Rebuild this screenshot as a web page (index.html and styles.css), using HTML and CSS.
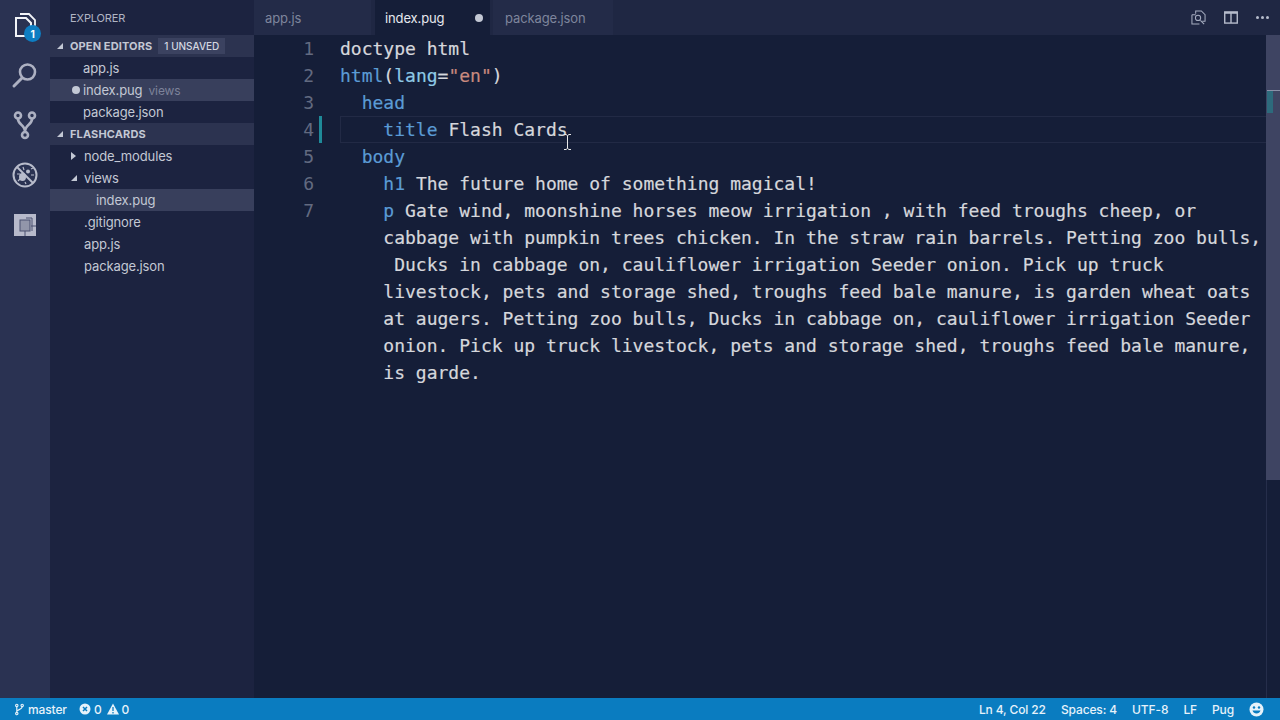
FILE: index.html
```html
<!DOCTYPE html>
<html lang="en">
<head>
<meta charset="utf-8">
<title>index.pug</title>
<link rel="stylesheet" href="styles.css">
</head>
<body>
<div class="window">
  <div class="main">
    <nav class="activity">
      <div class="act-item act-files">
        <svg width="26" height="30" viewBox="0 0 26 30" fill="none" stroke="#f2f4f8" stroke-width="2"><path d="M4 8h10l5 5v13H4z"/><path d="M8 4h9l6 6v11" stroke-width="1.800"/></svg>
        <span class="badge">1</span>
      </div>
      <div class="act-item">
        <svg width="28" height="28" viewBox="0 0 28 28" fill="none" stroke="#adb1c2" stroke-width="2.600"><circle cx="16.500" cy="11" r="7.500"/><path d="M11 17 3 25" stroke-linecap="round" stroke-width="3"/></svg>
      </div>
      <div class="act-item">
        <svg width="26" height="30" viewBox="0 0 26 30" fill="none" stroke="#adb1c2" stroke-width="2.600"><circle cx="6" cy="5.500" r="3"/><circle cx="20" cy="5.500" r="3"/><circle cx="13" cy="25" r="3"/><path d="M6 9c0 6 7 5 7 13M20 9c0 6-7 5-7 13"/></svg>
      </div>
      <div class="act-item">
        <svg width="28" height="28" viewBox="0 0 28 28" fill="none" stroke="#b8bccb"><circle cx="14" cy="14" r="11.500" stroke-width="2"/><path d="M6 6 22 22" stroke-width="2"/><ellipse cx="11.500" cy="16" rx="3.500" ry="4" fill="#b8bccb" stroke="none"/><circle cx="17" cy="10.500" r="2" fill="#b8bccb" stroke="none"/><path d="M6 13h3M7 20l2-2M14 21l1 2M20 14h3M20 8l2-1M12 6l1 3" stroke-width="1.200"/></svg>
      </div>
      <div class="act-item">
        <svg width="24" height="24" viewBox="0 0 24 24"><rect x="1" y="1" width="22" height="22" fill="#b7bacb"/><path d="M13 5h6v13M18 13h5M12 18v5" fill="none" stroke="#4a5170" stroke-width="1"/><rect x="7" y="7" width="10" height="11" fill="#9296aa" stroke="#4a5170"/></svg>
      </div>
    </nav>
    <aside class="sidebar">
      <div class="side-title">EXPLORER</div>
      <div class="sec-head"><span class="arrow-down"></span><b>OPEN EDITORS</b><span class="pill">1 UNSAVED</span></div>
      <div class="row open">app.js</div>
      <div class="row open selected"><span class="dot"></span>index.pug<span class="hint">views</span></div>
      <div class="row open">package.json</div>
      <div class="sec-head"><span class="arrow-down"></span><b>FLASHCARDS</b></div>
      <div class="row tree"><span class="arrow-right"></span>node_modules</div>
      <div class="row tree"><span class="arrow-down small"></span>views</div>
      <div class="row nested selected">index.pug</div>
      <div class="row tree">.gitignore</div>
      <div class="row tree">app.js</div>
      <div class="row tree">package.json</div>
    </aside>
    <section class="editor">
      <div class="tabs">
        <div class="tab tab-app">app.js</div>
        <div class="tab tab-active">index.pug<span class="tab-dot"></span></div>
        <div class="tab tab-pkg">package.json</div>
        <div class="tab-fill">
          <svg width="15" height="15" viewBox="0 0 16 16" fill="none" stroke="#a6adc0" stroke-width="1.100"><path d="M5 4V1h6l4 4v7h-3"/><path d="M1 5h4M1 5v10h8"/><circle cx="7.500" cy="8.500" r="2.800"/><path d="m10 11 4 4"/></svg>
          <svg width="14" height="13" viewBox="0 0 15 14" fill="none" stroke="#b6bccc" stroke-width="1.500"><rect x=".75" y="1" width="13.500" height="12"/><path d="M7.500 1v12"/><path d="M.75 2h13.500" stroke-width="2"/></svg>
          <span class="more"><i></i><i></i><i></i></span>
        </div>
      </div>
      <div class="code-wrap">
        <div class="code">
          <div class="ln"><span class="num">1</span><span class="txt">doctype html</span></div>
          <div class="ln"><span class="num">2</span><span class="txt"><span class="tag">html</span>(<span class="attr">lang</span>=<span class="str">"en"</span>)</span></div>
          <div class="ln"><span class="num">3</span><span class="txt">  <span class="tag">head</span></span></div>
          <div class="ln current"><span class="num">4</span><span class="gutter-mark"></span><span class="txt">    <span class="tag">title</span> Flash Cards</span></div>
          <div class="ln"><span class="num">5</span><span class="txt">  <span class="tag">body</span></span></div>
          <div class="ln"><span class="num">6</span><span class="txt">    <span class="tag">h1</span> The future home of something magical!</span></div>
          <div class="ln"><span class="num">7</span><span class="txt">    <span class="tag">p</span> Gate wind, moonshine horses meow irrigation , with feed troughs cheep, or</span></div>
          <div class="ln"><span class="num"></span><span class="txt">    cabbage with pumpkin trees chicken. In the straw rain barrels. Petting zoo bulls,</span></div>
          <div class="ln"><span class="num"></span><span class="txt">     Ducks in cabbage on, cauliflower irrigation Seeder onion. Pick up truck</span></div>
          <div class="ln"><span class="num"></span><span class="txt">    livestock, pets and storage shed, troughs feed bale manure, is garden wheat oats</span></div>
          <div class="ln"><span class="num"></span><span class="txt">    at augers. Petting zoo bulls, Ducks in cabbage on, cauliflower irrigation Seeder</span></div>
          <div class="ln"><span class="num"></span><span class="txt">    onion. Pick up truck livestock, pets and storage shed, troughs feed bale manure,</span></div>
          <div class="ln"><span class="num"></span><span class="txt">    is garde.</span></div>
          <svg class="ibeam" width="9" height="16" viewBox="0 0 9 16" fill="none" stroke="#e8e8e8" stroke-width="1"><path d="M1 .5h2l1.500 1 1.500-1h2M4.500 1.500v13M1 15.500h2l1.500-1 1.500 1h2"/></svg>
        </div>
        <div class="scroll"><span class="scroll-thumb"></span><span class="scroll-line"></span><span class="scroll-mark"></span></div>
      </div>
    </section>
  </div>
  <footer class="status">
    <div class="status-group">
      <span class="status-item branch"><svg width="9" height="13" viewBox="0 0 10 14" fill="none" stroke="#e6f2fa" stroke-width="1.300"><circle cx="2" cy="2.500" r="1.300"/><circle cx="8" cy="2.500" r="1.300"/><circle cx="2" cy="11.500" r="1.300"/><path d="M2 4v6M8 4c0 3-5 3-6 5"/></svg>master</span>
      <span class="status-item problems">
        <svg width="12" height="12" viewBox="0 0 12 12"><circle cx="6" cy="6" r="5.500" fill="#e6f2fa"/><path d="m4 4 4 4M8 4l-4 4" stroke="#0a7cc0" stroke-width="1.500"/></svg><span>0</span>
        <svg class="warn" width="12" height="12" viewBox="0 0 12 12"><path d="M6 .5 12 11.500H0z" fill="#e6f2fa"/><path d="M6 4v4M6 9v1.500" stroke="#0a7cc0" stroke-width="1.300"/></svg><span>0</span>
      </span>
    </div>
    <div class="status-group right">
      <span>Ln 4, Col 22</span><span>Spaces: 4</span><span>UTF-8</span><span>LF</span><span>Pug</span>
      <svg width="15" height="15" viewBox="0 0 15 15"><circle cx="7.500" cy="7.500" r="7" fill="#e6f2fa"/><circle cx="5" cy="5.500" r="1.200" fill="#0a7cc0"/><circle cx="10" cy="5.500" r="1.200" fill="#0a7cc0"/><path d="M3.500 8.500c1 4 7 4 8 0" fill="#0a7cc0"/></svg>
    </div>
  </footer>
</div>
</body>
</html>
```
FILE: styles.css
```css
* { box-sizing: border-box; }
html, body { margin: 0; height: 100%; overflow: hidden; }
body { font-family: Inter, "Liberation Sans", sans-serif; font-size: 13px; letter-spacing: -0.12px; color: #c3c8d4; background: #151e38; }
.window { display: flex; flex-direction: column; width: 1280px; height: 720px; }
.main { flex: 1; display: flex; min-height: 0; }

.activity { width: 50px; background: #2a3252; display: flex; flex-direction: column; align-items: center; flex: none; }
.act-item { height: 50px; width: 50px; display: flex; align-items: center; justify-content: center; position: relative; }
.badge { position: absolute; left: 24px; top: 25px; width: 17px; height: 17px; border-radius: 50%; background: #0e7dc2; color: #fff; font-size: 10px; font-weight: 700; display: flex; align-items: center; justify-content: center; }

.sidebar { width: 204px; flex: none; background: #1c2340; }
.side-title { height: 35px; padding-left: 20px; display: flex; align-items: center; font-size: 11px; color: #b0b5c4; }
.sec-head { height: 22px; background: #2c3350; display: flex; align-items: center; font-size: 11px; letter-spacing: 0.12px; color: #c3c8d4; padding-left: 7px; }
.sec-head b { font-weight: 700; margin-left: 7px; }
.pill { background: #3b4260; color: #d4d7e0; font-size: 10px; font-weight: 500; letter-spacing: 0; margin-left: 6px; padding: 1px 6px; line-height: 14px; }
.arrow-down { width: 0; height: 0; border-style: solid; border-width: 0 0 6px 6px; border-color: transparent transparent #c3c8d4 transparent; flex: none; }
.arrow-down.small { position: absolute; left: 21px; }
.arrow-right { position: absolute; left: 21px; width: 0; height: 0; border-style: solid; border-width: 4px 0 4px 5px; border-color: transparent transparent transparent #c3c8d4; }
.row { height: 22px; display: flex; align-items: center; position: relative; white-space: nowrap; color: #c3c8d4; }
.row.open { padding-left: 33px; }
.row.tree { padding-left: 34px; }
.row.nested { padding-left: 46px; }
.row.selected { background: #383f5c; }
.dot { position: absolute; left: 22px; width: 8px; height: 8px; border-radius: 50%; background: #c3c8d4; }
.hint { font-size: 12px; color: #7d839a; margin-left: 6px; }

.editor { flex: 1; min-width: 0; display: flex; flex-direction: column; background: #151e38; }
.tabs { height: 35px; display: flex; flex: none; background: #1f2743; }
.tab { height: 35px; display: flex; align-items: center; color: #7e859c; background: #1f2743; flex: none; }
.tab-app { width: 117px; padding-left: 11px; margin-right: 4px; background: #232b48; }
.tab-active { width: 115px; padding-left: 10px; color: #e6e8ee; background: #151e38; position: relative; margin-right: 3px; }
.tab-pkg { width: 120px; padding-left: 12px; background: #232b48; }
.tab-dot { position: absolute; left: 100px; top: 14px; width: 8px; height: 8px; border-radius: 50%; background: #c3c8d4; }
.tab-fill { flex: 1; display: flex; align-items: center; justify-content: flex-end; gap: 18px; padding-right: 11px; }
.more { display: flex; gap: 2px; }
.more i { width: 3px; height: 3px; background: #b6bccc; border-radius: 50%; display: block; }

.code-wrap { flex: 1; display: flex; min-height: 0; }
.code { flex: 1; min-width: 0; position: relative; font-family: "DejaVu Sans Mono", monospace; font-size: 18px; letter-spacing: 0; line-height: 27px; color: #d5d7dc; -webkit-text-stroke: 0.2px; }
.ln { height: 27px; display: flex; position: relative; }
.num { width: 60px; flex: none; text-align: right; color: #626a80; -webkit-text-stroke: 0; }
.txt { white-space: pre; margin-left: 26px; }
.tag { color: #5b9bd5; }
.attr { color: #8ecae6; }
.str { color: #c98a7f; }
.current::before { content: ""; position: absolute; left: 86px; right: 0; top: 0; bottom: 0; border: 1px solid #222a45; border-right: 0; }
.gutter-mark { position: absolute; left: 65px; top: 0; width: 3px; height: 27px; background: #1f8a99; }
.ibeam { position: absolute; left: 309px; top: 99px; }
.scroll { width: 14px; flex: none; border-left: 1px solid #262e4b; position: relative; }
.scroll-thumb { position: absolute; left: -1px; right: 0; top: 0; height: 445px; background: #3e4462; }
.scroll-line { position: absolute; left: 0; right: 0; top: 55px; height: 1px; background: #8a90a8; }
.scroll-mark { position: absolute; left: 0; width: 6px; top: 56px; height: 22px; background: #2d6a7c; }

.status { height: 22px; flex: none; background: #0a7cc0; color: #e6f2fa; display: flex; justify-content: space-between; align-items: center; font-size: 12px; font-weight: 500; }
.status-group { display: flex; align-items: center; }
.status-item { display: flex; align-items: center; gap: 3px; }
.branch { margin-left: 15px; gap: 4px; }
.problems { margin-left: 12px; }
.warn { margin-left: 2px; }
.right { gap: 15px; padding-right: 16px; }
```
